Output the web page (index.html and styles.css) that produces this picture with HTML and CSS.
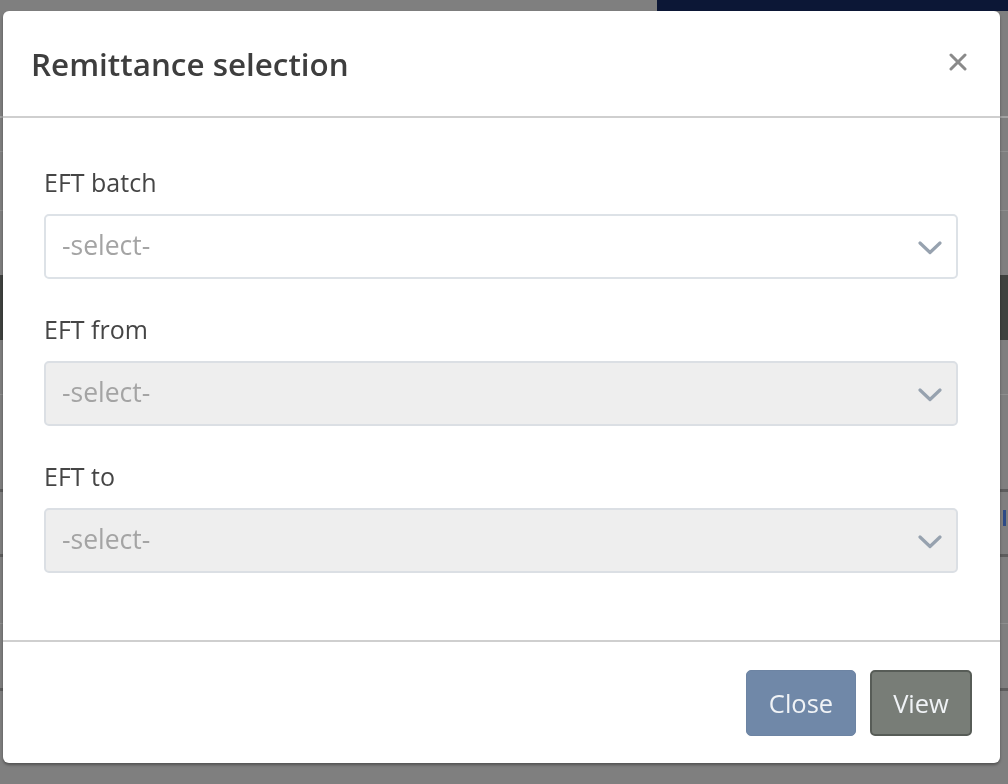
FILE: index.html
```html
<!DOCTYPE html>
<html lang="en">
<head>
<meta charset="utf-8">
<title>Remittance selection</title>
<link rel="stylesheet" href="styles.css">
</head>
<body>
<div class="page">
  <div class="topbar"><div class="topbar-fill"></div><div class="topbar-nav"></div></div>
  <div class="bg-row bg-h105"></div>
  <div class="bg-row bg-line-light"></div>
  <div class="bg-row bg-h33"></div>
  <div class="bg-row bg-line"></div>
  <div class="bg-row bg-h58"></div>
  <div class="bg-row bg-line"></div>
  <div class="bg-row bg-h64"></div>
  <div class="bg-row bg-dark"></div>
  <div class="bg-row bg-h54"></div>
  <div class="bg-row bg-line"></div>
  <div class="bg-row bg-h94"></div>
  <div class="bg-row bg-line-dark"></div>
  <div class="bg-row bg-h62"><span class="bg-mark"></span></div>
  <div class="bg-row bg-line-dark"></div>
  <div class="bg-row bg-h66"></div>
  <div class="bg-row bg-line"></div>
  <div class="bg-row bg-h64"></div>
  <div class="bg-row bg-line-dark"></div>
</div>

<div class="modal" role="dialog" aria-labelledby="modal-title">
  <div class="modal-header">
    <h5 class="modal-title" id="modal-title">Remittance selection</h5>
    <button class="btn-x" type="button" aria-label="Close">
      <svg viewBox="0 0 18 18" width="18" height="18"><path d="M2 2 L16 16 M16 2 L2 16" stroke="#8a8a8a" stroke-width="3" stroke-linecap="round" fill="none"/></svg>
    </button>
  </div>
  <div class="modal-body">
    <div class="field">
      <label class="field-label">EFT batch</label>
      <div class="select">
        <span class="select-text">-select-</span>
        <svg class="chev" viewBox="0 0 24 14" width="24" height="14"><path d="M2 2 L12 11.5 L22 2" stroke="#97a2af" stroke-width="3.2" stroke-linecap="round" stroke-linejoin="round" fill="none"/></svg>
      </div>
    </div>
    <div class="field">
      <label class="field-label">EFT from</label>
      <div class="select disabled">
        <span class="select-text">-select-</span>
        <svg class="chev" viewBox="0 0 24 14" width="24" height="14"><path d="M2 2 L12 11.5 L22 2" stroke="#97a2af" stroke-width="3.2" stroke-linecap="round" stroke-linejoin="round" fill="none"/></svg>
      </div>
    </div>
    <div class="field">
      <label class="field-label">EFT to</label>
      <div class="select disabled">
        <span class="select-text">-select-</span>
        <svg class="chev" viewBox="0 0 24 14" width="24" height="14"><path d="M2 2 L12 11.5 L22 2" stroke="#97a2af" stroke-width="3.2" stroke-linecap="round" stroke-linejoin="round" fill="none"/></svg>
      </div>
    </div>
  </div>
  <div class="modal-footer">
    <button class="btn btn-close" type="button">Close</button>
    <button class="btn btn-view" type="button">View</button>
  </div>
</div>
</body>
</html>
```

FILE: styles.css
```css
* { box-sizing: border-box; }
html, body { margin: 0; padding: 0; }
body {
  width: 1008px;
  height: 784px;
  overflow: hidden;
  background: #7f7f7f;
  font-family: "Open Sans", "Noto Sans", sans-serif;
}

/* page behind the backdrop (already dimmed) */
.page { width: 1008px; height: 784px; background: #7f7f7f; }
.topbar { display: flex; height: 11px; }
.topbar-fill { width: 657px; background: #7f7f7f; }
.topbar-nav { flex: 1; background: #0c1736; }
.bg-row { width: 100%; position: relative; }
.bg-h105 { height: 105px; }
.bg-h33 { height: 33px; }
.bg-h58 { height: 58px; }
.bg-h64 { height: 64px; }
.bg-h54 { height: 54px; }
.bg-h94 { height: 94px; }
.bg-h62 { height: 62px; }
.bg-h66 { height: 66px; }
.bg-line-light { height: 2px; background: #a2a2a2; }
.bg-line { height: 1px; background: #8e8e8e; }
.bg-line-dark { height: 3px; background: #5d5d5d; }
.bg-dark { height: 65px; background: #3f423f; }
.bg-mark { position: absolute; right: 2px; top: 18px; width: 3px; height: 16px; background: #2d4a86; }

/* modal */
.modal {
  position: fixed;
  left: 3px;
  top: 11px;
  width: 997px;
  height: 752px;
  background: #fff;
  border-radius: 6px;
  box-shadow: 0 2px 3px rgba(0, 0, 0, 0.35);
  display: flex;
  flex-direction: column;
  overflow: hidden;
}
.modal-header {
  height: 107px;
  flex: none;
  display: flex;
  align-items: center;
  justify-content: space-between;
  padding: 0 33px 0 28px;
  border-bottom: 2px solid #cfcfcf;
}
.modal-title {
  margin: 0;
  font-size: 31.4px;
  font-weight: 600;
  color: #3e3e3e;
  line-height: 1.2;
}
.btn-x {
  border: 0;
  background: none;
  padding: 0;
  width: 18px;
  height: 18px;
  display: flex;
  margin-top: -3px;
}

.modal-body {
  flex: 1;
  padding: 46px 42px 0 41px;
  display: flex;
  flex-direction: column;
  gap: 32px;
}
.field { display: flex; flex-direction: column; gap: 13px; }
.field-label {
  display: block;
  height: 37px;
  line-height: 37px;
  font-size: 25px;
  color: #454545;
}
.select {
  height: 65px;
  border: 2px solid #dde2e7;
  border-radius: 5px;
  background: #fff;
  display: flex;
  align-items: center;
  justify-content: space-between;
  padding: 0 14px 3px 16px;
}
.select.disabled { background: #eeeeee; border-color: #dbdfe4; }
.select-text { font-size: 26.5px; color: #a4a4a4; }
.chev { display: block; margin-top: 5px; }

.modal-footer {
  height: 123px;
  flex: none;
  border-top: 2px solid #cfcfcf;
  display: flex;
  justify-content: flex-end;
  align-items: flex-start;
  gap: 14px;
  padding: 28px 28px 0 0;
}
.btn {
  height: 66px;
  border-radius: 5px;
  font-family: "Open Sans", "Noto Sans", sans-serif;
  font-size: 25.5px;
  font-weight: 500;
  color: #f0f3f6;
  cursor: pointer;
}
.btn-close { width: 110px; background: #7088a8; border: 1px solid #6d84a3; padding: 0; }
.btn-view { width: 102px; background: #787d77; border: 2px solid #575c57; padding: 0; }
```
